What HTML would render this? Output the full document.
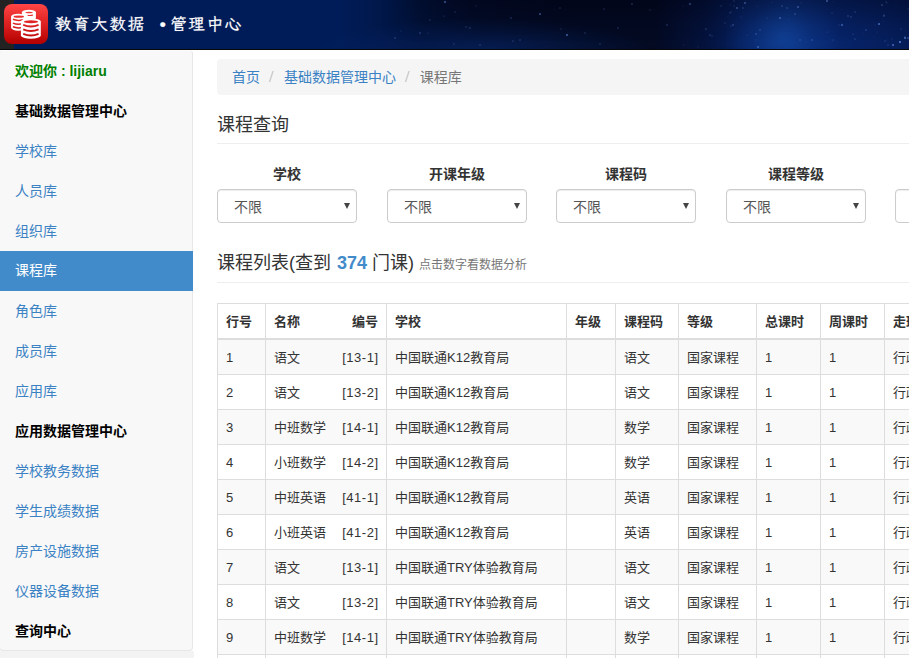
<!DOCTYPE html>
<html lang="zh-CN">
<head>
<meta charset="utf-8">
<title>教育大数据 · 管理中心</title>
<style>
*{box-sizing:border-box;}
html,body{margin:0;padding:0;}
body{width:909px;height:658px;overflow:hidden;background:#fff;position:relative;
  font-family:"Liberation Sans","Noto Sans CJK SC",sans-serif;font-size:14px;line-height:20px;color:#333;}
a{color:#3a82c4;text-decoration:none;}

/* ---------- top bar ---------- */
#topbar{position:absolute;left:0;top:0;width:909px;height:50px;background:#222;border-bottom:1px solid #080808;overflow:hidden;}
#banner{position:absolute;left:14px;top:0;width:895px;height:49px;
  background:
    radial-gradient(ellipse 58px 60px at 768px 36px, rgba(22,78,172,.55), rgba(16,62,150,.28) 55%, rgba(10,40,110,0) 100%),
    radial-gradient(ellipse 170px 34px at 470px 52px, rgba(8,44,120,.55), rgba(8,44,120,0) 100%),
    linear-gradient(180deg, rgba(0,0,12,0) 0, rgba(0,0,12,0) 100%),
    linear-gradient(90deg,#001c58 0px,#001c58 326px,#011748 372px,#021034 410px,#030c28 470px,#030a22 546px,#030a22 640px,#04123c 690px,#06205e 730px,#0a2e7a 776px,#07246a 826px,#051c56 895px);}
#shade{position:absolute;left:380px;top:0;width:529px;height:49px;background:linear-gradient(180deg,rgba(0,0,14,.38) 0,rgba(0,0,14,.12) 50%,rgba(0,0,14,0) 85%);
  -webkit-mask-image:linear-gradient(90deg,transparent 0,#000 90px);mask-image:linear-gradient(90deg,transparent 0,#000 90px);}
#banner svg{position:absolute;left:0;top:0;filter:blur(.35px);}
#logo{position:absolute;left:4px;top:4px;width:44px;height:40px;border-radius:8px;
  background:linear-gradient(180deg,#ff4545 0%,#e02424 45%,#b30000 100%);}
#logo svg{position:absolute;left:0;top:0;}
#title{position:absolute;left:54.5px;top:13px;height:24px;line-height:24px;-webkit-text-stroke:0.12px #fff;color:#fff;white-space:nowrap;
  font-family:"Liberation Serif","LXGW WenKai TC","Noto Serif CJK SC",serif;font-size:17px;letter-spacing:1.2px;text-shadow:0 0 1px rgba(255,255,255,.35);}
#title .dot{display:inline-block;width:24.5px;height:24px;text-align:center;letter-spacing:0;font-weight:bold;padding-left:10px;font-size:30px;line-height:22px;vertical-align:top;font-family:"Liberation Serif",serif;}

/* ---------- sidebar ---------- */
#side{position:absolute;left:-1px;top:50px;width:194px;height:601px;background:#f8f8f8;border:1px solid #e7e7e7;border-top-color:#fcfcfc;border-radius:4px;}
#under{position:absolute;left:0;top:651px;width:194px;height:7px;background:#f3f3f3;}
#side div{position:absolute;left:0;width:192px;height:40px;margin-top:1px;line-height:38px;padding-left:15px;white-space:nowrap;}
#side .hello{color:#008000;font-weight:bold;}
#side .hd{color:#000;font-weight:bold;}
#side .lk{color:#3a82c4;line-height:38px;}
#side .on{background:#428bca;color:#fff;left:-1px;width:194px;padding-left:16px;}

/* ---------- main ---------- */
#main{position:absolute;left:217px;top:50px;width:1000px;}
#crumb{position:absolute;left:0;top:9px;width:1000px;height:36px;background:#f5f5f5;border-radius:4px;padding:8px 15px;white-space:nowrap;}
#crumb .sep{color:#ccc;padding:0 10.5px 0 9.5px;display:inline-block;transform:scaleX(1.3);}
#crumb .cur{color:#777;}
.h4{position:absolute;left:0;width:1000px;font-size:18px;line-height:20px;color:#333;white-space:nowrap;border-bottom:1px solid #eee;}
.h4 b{color:#428bca;margin-left:1px;}
.h4 small{font-size:12px;color:#777;}
.fl{position:absolute;top:114px;width:140px;text-align:center;font-weight:bold;line-height:20px;}
.sel{position:absolute;top:139px;width:140px;height:34px;border:1px solid #ccc;border-radius:4px;background:#fff;color:#555;padding:7px 0 5px 16px;line-height:20px;box-shadow:inset 0 1px 1px rgba(0,0,0,.075);}
.sel i{position:absolute;right:6px;top:13px;width:0;height:0;border-left:3.5px solid transparent;border-right:3.5px solid transparent;border-top:6px solid #444;}

/* ---------- table ---------- */
#tbl{position:absolute;left:0;top:253px;border-collapse:collapse;table-layout:fixed;width:900px;font-size:13px;}
#tbl th,#tbl td{border:1px solid #ddd;padding:0 8px;height:35px;line-height:20px;text-align:left;white-space:nowrap;overflow:hidden;vertical-align:middle;}
#tbl td{padding-top:2px;}
#tbl th{height:35px;border-bottom:2px solid #ddd;font-weight:bold;padding-top:2px;}
#tbl tr.odd td{background:#f9f9f9;}
#tbl tr.first td{height:36px;}
#tbl .r{float:right;}
#tbl td .r{letter-spacing:.5px;margin-right:-.5px;}
</style>
</head>
<body>

<div id="topbar">
  <div id="banner"><svg width="895" height="49" viewBox="14 0 895 49"><circle cx="445" cy="2" r="1.0" fill="#6fa0ff" opacity="0.70"/><circle cx="395" cy="38" r="0.7" fill="#6fa0ff" opacity="0.50"/><circle cx="420" cy="33" r="0.7" fill="#6fa0ff" opacity="0.50"/><circle cx="511" cy="18" r="0.7" fill="#6fa0ff" opacity="0.55"/><circle cx="540" cy="14" r="1.0" fill="#6fa0ff" opacity="0.60"/><circle cx="567" cy="35" r="1.0" fill="#6fa0ff" opacity="0.60"/><circle cx="618" cy="28" r="0.7" fill="#6fa0ff" opacity="0.45"/><circle cx="667" cy="25" r="0.7" fill="#6fa0ff" opacity="0.50"/><circle cx="737" cy="8" r="1.0" fill="#6fa0ff" opacity="0.60"/><circle cx="798" cy="7" r="1.0" fill="#6fa0ff" opacity="0.70"/><circle cx="780" cy="18" r="1.0" fill="#6fa0ff" opacity="0.60"/><circle cx="827" cy="1" r="1.0" fill="#6fa0ff" opacity="0.80"/><circle cx="879" cy="24" r="1.0" fill="#6fa0ff" opacity="0.70"/><circle cx="900" cy="42" r="1.0" fill="#6fa0ff" opacity="0.80"/><circle cx="842" cy="25" r="1.0" fill="#6fa0ff" opacity="0.60"/><circle cx="690" cy="4" r="1.0" fill="#6fa0ff" opacity="0.60"/><circle cx="745" cy="3" r="1.0" fill="#6fa0ff" opacity="0.70"/><circle cx="470" cy="28" r="0.7" fill="#6fa0ff" opacity="0.40"/><circle cx="480" cy="45" r="0.7" fill="#6fa0ff" opacity="0.40"/><circle cx="600" cy="44" r="0.7" fill="#6fa0ff" opacity="0.35"/><circle cx="866" cy="30" r="0.7" fill="#6fa0ff" opacity="0.50"/><circle cx="893" cy="45" r="1.0" fill="#6fa0ff" opacity="0.60"/><circle cx="905" cy="38" r="1.0" fill="#6fa0ff" opacity="0.60"/><circle cx="560" cy="8" r="0.7" fill="#6fa0ff" opacity="0.40"/><circle cx="520" cy="40" r="0.7" fill="#6fa0ff" opacity="0.40"/><circle cx="430" cy="20" r="0.7" fill="#6fa0ff" opacity="0.35"/><circle cx="455" cy="12" r="0.7" fill="#6fa0ff" opacity="0.40"/><circle cx="760" cy="30" r="0.7" fill="#6fa0ff" opacity="0.45"/><circle cx="812" cy="40" r="0.7" fill="#6fa0ff" opacity="0.50"/><circle cx="855" cy="12" r="0.7" fill="#6fa0ff" opacity="0.50"/><circle cx="710" cy="35" r="0.7" fill="#6fa0ff" opacity="0.40"/><circle cx="650" cy="10" r="0.7" fill="#6fa0ff" opacity="0.35"/><circle cx="901" cy="29" r="0.6" fill="#7fa8ff" opacity="0.45"/><circle cx="885" cy="41" r="0.6" fill="#7fa8ff" opacity="0.45"/><circle cx="476" cy="6" r="0.5" fill="#7fa8ff" opacity="0.45"/><circle cx="887" cy="40" r="0.5" fill="#7fa8ff" opacity="0.22"/><circle cx="444" cy="16" r="0.5" fill="#7fa8ff" opacity="0.45"/><circle cx="832" cy="13" r="0.6" fill="#7fa8ff" opacity="0.45"/><circle cx="721" cy="6" r="0.7" fill="#7fa8ff" opacity="0.35"/><circle cx="741" cy="17" r="0.6" fill="#7fa8ff" opacity="0.28"/><circle cx="905" cy="37" r="0.9" fill="#7fa8ff" opacity="0.18"/><circle cx="896" cy="5" r="0.5" fill="#7fa8ff" opacity="0.18"/><circle cx="733" cy="25" r="0.9" fill="#7fa8ff" opacity="0.35"/><circle cx="454" cy="44" r="0.7" fill="#7fa8ff" opacity="0.28"/><circle cx="469" cy="27" r="0.6" fill="#7fa8ff" opacity="0.18"/><circle cx="632" cy="4" r="0.9" fill="#7fa8ff" opacity="0.35"/><circle cx="561" cy="29" r="0.6" fill="#7fa8ff" opacity="0.45"/><circle cx="787" cy="8" r="0.9" fill="#7fa8ff" opacity="0.35"/><circle cx="789" cy="20" r="0.6" fill="#7fa8ff" opacity="0.18"/><circle cx="874" cy="37" r="0.5" fill="#7fa8ff" opacity="0.18"/><circle cx="734" cy="1" r="0.7" fill="#7fa8ff" opacity="0.45"/><circle cx="683" cy="6" r="0.6" fill="#7fa8ff" opacity="0.22"/><circle cx="833" cy="40" r="0.6" fill="#7fa8ff" opacity="0.35"/><circle cx="875" cy="25" r="0.6" fill="#7fa8ff" opacity="0.22"/><circle cx="698" cy="47" r="0.6" fill="#7fa8ff" opacity="0.22"/><circle cx="855" cy="39" r="0.9" fill="#7fa8ff" opacity="0.18"/><circle cx="428" cy="33" r="0.6" fill="#7fa8ff" opacity="0.28"/><circle cx="827" cy="32" r="0.6" fill="#7fa8ff" opacity="0.28"/><circle cx="712" cy="36" r="0.5" fill="#7fa8ff" opacity="0.45"/><circle cx="772" cy="2" r="0.7" fill="#7fa8ff" opacity="0.18"/><circle cx="801" cy="3" r="0.7" fill="#7fa8ff" opacity="0.22"/><circle cx="757" cy="6" r="0.6" fill="#7fa8ff" opacity="0.28"/><circle cx="888" cy="45" r="0.6" fill="#7fa8ff" opacity="0.45"/><circle cx="684" cy="45" r="0.5" fill="#7fa8ff" opacity="0.28"/><circle cx="401" cy="31" r="0.7" fill="#7fa8ff" opacity="0.18"/><circle cx="706" cy="29" r="0.7" fill="#7fa8ff" opacity="0.45"/><circle cx="908" cy="9" r="0.7" fill="#7fa8ff" opacity="0.28"/><circle cx="466" cy="27" r="0.9" fill="#7fa8ff" opacity="0.18"/><circle cx="839" cy="25" r="0.5" fill="#7fa8ff" opacity="0.45"/><circle cx="743" cy="8" r="0.9" fill="#7fa8ff" opacity="0.28"/><circle cx="908" cy="38" r="0.9" fill="#7fa8ff" opacity="0.35"/><circle cx="853" cy="34" r="0.5" fill="#7fa8ff" opacity="0.45"/><circle cx="833" cy="2" r="0.5" fill="#7fa8ff" opacity="0.22"/><circle cx="877" cy="32" r="0.5" fill="#7fa8ff" opacity="0.28"/><circle cx="756" cy="40" r="0.6" fill="#7fa8ff" opacity="0.22"/><circle cx="848" cy="16" r="0.9" fill="#7fa8ff" opacity="0.28"/><circle cx="730" cy="13" r="0.9" fill="#7fa8ff" opacity="0.22"/><circle cx="604" cy="9" r="0.9" fill="#7fa8ff" opacity="0.22"/><circle cx="730" cy="5" r="0.6" fill="#7fa8ff" opacity="0.28"/><circle cx="795" cy="14" r="0.9" fill="#7fa8ff" opacity="0.35"/><circle cx="800" cy="40" r="0.7" fill="#7fa8ff" opacity="0.35"/><circle cx="892" cy="39" r="0.7" fill="#7fa8ff" opacity="0.18"/><circle cx="886" cy="2" r="0.9" fill="#7fa8ff" opacity="0.22"/><circle cx="728" cy="16" r="0.5" fill="#7fa8ff" opacity="0.22"/><circle cx="747" cy="35" r="0.5" fill="#7fa8ff" opacity="0.28"/><circle cx="731" cy="12" r="0.9" fill="#7fa8ff" opacity="0.18"/><circle cx="725" cy="23" r="0.6" fill="#7fa8ff" opacity="0.45"/><circle cx="782" cy="6" r="0.9" fill="#7fa8ff" opacity="0.35"/><circle cx="513" cy="41" r="0.9" fill="#7fa8ff" opacity="0.18"/><circle cx="883" cy="21" r="0.5" fill="#7fa8ff" opacity="0.22"/><circle cx="734" cy="6" r="0.7" fill="#7fa8ff" opacity="0.28"/><circle cx="863" cy="33" r="0.5" fill="#7fa8ff" opacity="0.18"/><circle cx="767" cy="18" r="0.5" fill="#7fa8ff" opacity="0.35"/><circle cx="887" cy="3" r="0.7" fill="#7fa8ff" opacity="0.22"/><circle cx="758" cy="47" r="0.9" fill="#7fa8ff" opacity="0.45"/><circle cx="884" cy="15" r="0.7" fill="#7fa8ff" opacity="0.35"/><circle cx="851" cy="17" r="0.9" fill="#7fa8ff" opacity="0.28"/><circle cx="756" cy="34" r="0.9" fill="#7fa8ff" opacity="0.28"/><circle cx="585" cy="33" r="0.9" fill="#7fa8ff" opacity="0.18"/><circle cx="731" cy="26" r="0.5" fill="#7fa8ff" opacity="0.45"/><circle cx="882" cy="5" r="0.9" fill="#7fa8ff" opacity="0.45"/><circle cx="884" cy="16" r="0.9" fill="#7fa8ff" opacity="0.35"/></svg></div>
  <div id="shade"></div>
  <div id="logo"><svg width="44" height="40" viewBox="0 0 44 40">
    <defs><linearGradient id="rg" gradientUnits="userSpaceOnUse" x1="0" y1="0" x2="0" y2="40"><stop offset="0" stop-color="#ff4545"/><stop offset=".45" stop-color="#e02424"/><stop offset="1" stop-color="#b30000"/></linearGradient></defs>
    <!-- back top cylinder -->
    <path d="M17.9 8.5V14a7 2.7 0 0 0 14 0V8.5z" fill="#fff"/>
    <ellipse cx="24.9" cy="8.5" rx="7" ry="2.7" fill="#fff"/>
    <ellipse cx="25.1" cy="8.5" rx="3.8" ry="0.8" fill="url(#rg)"/>
    <path d="M23.6 11.2q2.6.7 5.4-.2" stroke="url(#rg)" stroke-width="1.1" fill="none"/>
    <!-- back left cylinder -->
    <path d="M7.1 12.6V23.8a7 2.9 0 0 0 14 0V12.6z" fill="#fff"/>
    <ellipse cx="14.1" cy="12.6" rx="7" ry="2.9" fill="#fff"/>
    <ellipse cx="14.8" cy="12.7" rx="5.2" ry="1.1" fill="url(#rg)"/>
    <path d="M8.9 15.3q5 2 10 .4" stroke="url(#rg)" stroke-width="1.5" fill="none"/>
    <path d="M8.9 19.1q5 2 10 .4" stroke="url(#rg)" stroke-width="1.5" fill="none"/>
    <path d="M8.9 22.8q5 2 10 .4" stroke="url(#rg)" stroke-width="1.5" fill="none"/>
    <!-- front cylinder -->
    <path d="M16.9 17.5V31.6a9.95 3.1 0 0 0 19.9 0V17.5z" fill="#fff"/>
    <ellipse cx="26.85" cy="17.5" rx="9.95" ry="3.1" fill="#fff"/>
    <ellipse cx="27" cy="17.7" rx="7.2" ry="1.5" fill="url(#rg)"/>
    <path d="M19.2 20.9q7.7 3.2 15.4 0" stroke="url(#rg)" stroke-width="1.9" fill="none"/>
    <path d="M19.2 25.4q7.7 3.2 15.4 0" stroke="url(#rg)" stroke-width="1.9" fill="none"/>
    <path d="M19.2 29.9q7.7 3.2 15.4 0" stroke="url(#rg)" stroke-width="1.9" fill="none"/>
  </svg></div>
  <div id="title">教育大数据<span class="dot">·</span>管理中心</div>
</div>

<div id="under"></div>
<div id="side">
  <div class="hello" style="top:0">欢迎你 : lijiaru</div>
  <div class="hd" style="top:40px">基础数据管理中心</div>
  <div class="lk" style="top:80px">学校库</div>
  <div class="lk" style="top:120px">人员库</div>
  <div class="lk" style="top:160px">组织库</div>
  <div class="lk on" style="top:199px">课程库</div>
  <div class="lk" style="top:240px">角色库</div>
  <div class="lk" style="top:280px">成员库</div>
  <div class="lk" style="top:320px">应用库</div>
  <div class="hd" style="top:360px">应用数据管理中心</div>
  <div class="lk" style="top:400px">学校教务数据</div>
  <div class="lk" style="top:440px">学生成绩数据</div>
  <div class="lk" style="top:480px">房产设施数据</div>
  <div class="lk" style="top:520px">仪器设备数据</div>
  <div class="hd" style="top:560px">查询中心</div>
</div>

<div id="main">
  <div id="crumb"><a>首页</a><span class="sep">/</span><a>基础数据管理中心</a><span class="sep">/</span><span class="cur">课程库</span></div>

  <div class="h4" style="top:64px;height:30px;padding-top:1px">课程查询</div>

  <div class="fl" style="left:0">学校</div>
  <div class="fl" style="left:170px">开课年级</div>
  <div class="fl" style="left:339px">课程码</div>
  <div class="fl" style="left:509px">课程等级</div>
  <div class="sel" style="left:0">不限<i></i></div>
  <div class="sel" style="left:170px">不限<i></i></div>
  <div class="sel" style="left:339px">不限<i></i></div>
  <div class="sel" style="left:509px">不限<i></i></div>
  <div class="sel" style="left:678px"><i></i></div>

  <div class="h4" style="top:203px;height:30px">课程列表(查到 <b>374</b> 门课) <small>点击数字看数据分析</small></div>

  <table id="tbl">
    <colgroup><col style="width:48px"><col style="width:121px"><col style="width:180px"><col style="width:49px"><col style="width:63px"><col style="width:78px"><col style="width:64px"><col style="width:64px"><col style="width:233px"></colgroup>
    <tr><th>行号</th><th>名称<span class="r">编号</span></th><th>学校</th><th>年级</th><th>课程码</th><th>等级</th><th>总课时</th><th>周课时</th><th>走班类型</th></tr>
    <tr class="odd first"><td>1</td><td>语文<span class="r">[13-1]</span></td><td>中国联通K12教育局</td><td></td><td>语文</td><td>国家课程</td><td>1</td><td>1</td><td>行政班</td></tr>
    <tr><td>2</td><td>语文<span class="r">[13-2]</span></td><td>中国联通K12教育局</td><td></td><td>语文</td><td>国家课程</td><td>1</td><td>1</td><td>行政班</td></tr>
    <tr class="odd"><td>3</td><td>中班数学<span class="r">[14-1]</span></td><td>中国联通K12教育局</td><td></td><td>数学</td><td>国家课程</td><td>1</td><td>1</td><td>行政班</td></tr>
    <tr><td>4</td><td>小班数学<span class="r">[14-2]</span></td><td>中国联通K12教育局</td><td></td><td>数学</td><td>国家课程</td><td>1</td><td>1</td><td>行政班</td></tr>
    <tr class="odd"><td>5</td><td>中班英语<span class="r">[41-1]</span></td><td>中国联通K12教育局</td><td></td><td>英语</td><td>国家课程</td><td>1</td><td>1</td><td>行政班</td></tr>
    <tr><td>6</td><td>小班英语<span class="r">[41-2]</span></td><td>中国联通K12教育局</td><td></td><td>英语</td><td>国家课程</td><td>1</td><td>1</td><td>行政班</td></tr>
    <tr class="odd"><td>7</td><td>语文<span class="r">[13-1]</span></td><td>中国联通TRY体验教育局</td><td></td><td>语文</td><td>国家课程</td><td>1</td><td>1</td><td>行政班</td></tr>
    <tr><td>8</td><td>语文<span class="r">[13-2]</span></td><td>中国联通TRY体验教育局</td><td></td><td>语文</td><td>国家课程</td><td>1</td><td>1</td><td>行政班</td></tr>
    <tr class="odd"><td>9</td><td>中班数学<span class="r">[14-1]</span></td><td>中国联通TRY体验教育局</td><td></td><td>数学</td><td>国家课程</td><td>1</td><td>1</td><td>行政班</td></tr>
    <tr><td>10</td><td>小班数学<span class="r">[14-2]</span></td><td>中国联通TRY体验教育局</td><td></td><td>数学</td><td>国家课程</td><td>1</td><td>1</td><td>行政班</td></tr>
  </table>
</div>

</body>
</html>
